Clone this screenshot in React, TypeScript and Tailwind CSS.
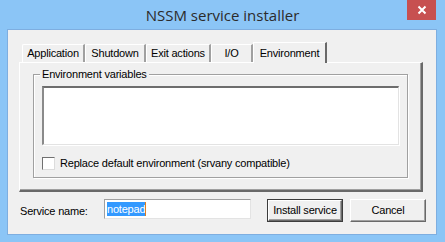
import React from "react";

const font = { fontFamily: '"Liberation Sans", Arial, sans-serif' };

function Tab({ label, w }: { label: string; w: string }) {
  return (
    <div
      className={`${w} h-[18px] mt-[2px] flex items-center justify-center border-l border-t border-white border-r-2 border-r-[#a0a0a0] text-[11px] text-black bg-[#f0f0f0] rounded-tl-[2px]`}
    >
      {label}
    </div>
  );
}

export default function App() {
  return (
    <div
      className="w-[445px] h-[242px] bg-[#8bc5f6] flex flex-col overflow-hidden"
      style={font}
    >
      {/* title bar */}
      <div className="h-[29px] grid grid-cols-[1fr_auto_1fr] shrink-0">
        <div />
        <div
          className="pt-[3px] text-[15px] text-[#2b2b2b] leading-[24px]"
          style={{ fontFamily: '"Open Sans", "Noto Sans", sans-serif' }}
        >
          NSSM service installer
        </div>
        <div className="flex justify-end pr-[9px]">
          <div className="w-[29px] h-[20px] bg-[#c75050] flex items-center justify-center">
            <svg width="10" height="10" viewBox="0 0 10 10">
              <path d="M1.5 1.5 L8.5 8.5 M8.5 1.5 L1.5 8.5" stroke="white" strokeWidth="2" />
            </svg>
          </div>
        </div>
      </div>

      {/* client area */}
      <div className="ml-[7px] mr-[8px] h-[206px] bg-[#f0f0f0] border border-[#7eaee0] flex flex-col text-[11px] tracking-[-0.2px] text-black">
        {/* tab control */}
        <div className="ml-[11px] mt-[12px] w-[404px] flex flex-col">
          <div className="flex h-[20px] items-end">
            <div className="ml-[3px] flex">
              <Tab label="Application" w="w-[63px]" />
              <Tab label="Shutdown" w="w-[61px]" />
              <Tab label="Exit actions" w="w-[65px]" />
              <Tab label="I/O" w="w-[42px]" />
            </div>
            <div className="w-[74px] h-[21px] -mb-[1px] relative z-10 flex items-start pt-[2px] justify-center border-l border-t border-white border-r-2 border-r-[#696969] bg-[#f0f0f0] text-[11px]">
              Environment
            </div>
          </div>
          {/* panel */}
          <div className="h-[130px] border-l border-t border-white border-r-2 border-b-2 border-r-[#696969] border-b-[#696969] bg-[#f0f0f0]">
            <div className="h-full border-r border-b border-[#a0a0a0] pl-[13px] pr-[12px] pt-[11px]">
              {/* group box */}
              <div className="relative h-[104px] border border-[#a0a0a0] shadow-[1px_1px_0_0_#ffffff,inset_1px_1px_0_0_#ffffff] pt-[11px] px-[8px]">
                <div className="absolute -top-[7px] left-[6px] px-[2px] bg-[#f0f0f0] leading-[13px]">
                  Environment variables
                </div>
                {/* edit */}
                <div className="h-[59px] bg-white border-t-2 border-l-2 border-t-[#6d6d6d] border-l-[#8a8a8a] border-r border-b border-r-[#e3e3e3] border-b-[#e3e3e3] shadow-[1px_1px_0_0_#ffffff]" />
                {/* checkbox */}
                <div className="flex items-center mt-[10px]">
                  <div className="w-[13px] h-[13px] bg-white border border-t-[#707070] border-l-[#707070] border-r-[#dcdcdc] border-b-[#dcdcdc]" />
                  <span className="ml-[5px]">Replace default environment (srvany compatible)</span>
                </div>
              </div>
            </div>
          </div>
        </div>

        {/* bottom row */}
        <div className="flex items-start mt-[7px] ml-[12px]">
          <span className="mt-[4px] w-[84px]">Service name:</span>
          <div className="w-[147px] h-[20px] bg-white border border-t-[#a0a0a0] border-l-[#a0a0a0] border-r-[#e3e3e3] border-b-[#e3e3e3] flex items-center pl-[2px]">
            <span className="bg-[#3399ff] text-white leading-[14px] px-[0px]">notepad</span>
            <span className="w-[1px] h-[14px] bg-[#e08020]" />
          </div>
          <div className="ml-[16px] w-[76px] h-[23px] border border-[#3c3c3c] bg-[#f0f0f0]">
            <div className="h-full border-t border-l border-white border-r border-b border-r-[#696969] border-b-[#696969] flex items-center justify-center shadow-[inset_-1px_-1px_0_0_#a0a0a0]">
              Install service
            </div>
          </div>
          <div className="ml-[7px] w-[76px] h-[23px] border-t border-l border-white border-r border-b border-r-[#696969] border-b-[#696969] flex items-center justify-center shadow-[inset_-1px_-1px_0_0_#a0a0a0] bg-[#f0f0f0]">
            Cancel
          </div>
        </div>
      </div>
    </div>
  );
}
